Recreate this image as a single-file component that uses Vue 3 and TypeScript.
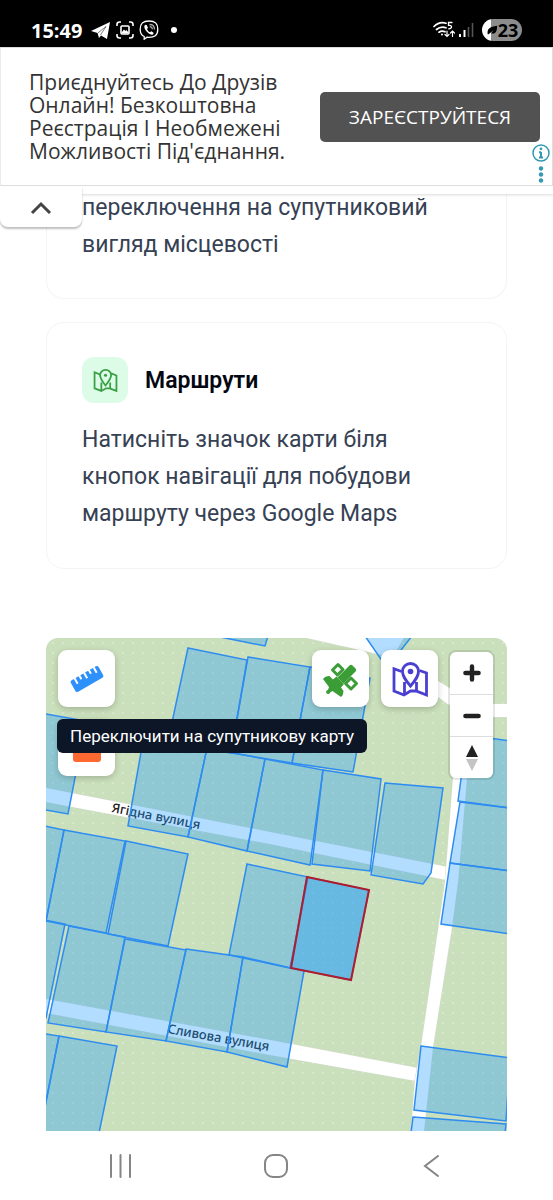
<script setup lang="ts">
import { ref } from 'vue'

const tipVisible = ref(true)
const adOpen = ref(true)

const roads: string[] = [
  '298,636 382,655 438,697 456,710 456,692 438,681 396,651 405,636',
  '450,704 507,704 507,717 450,717',
  '46,788 270,832 448,867 446,880 270,844 46,802',
  '46,999 270,1040 418,1068 416,1081 270,1055 46,1013',
  '457,710 471,710 467,778 458,882 452,927 433,1047 424,1131 411,1131 415,1080 421,1047 445,882 453,778',
]

const parcels: string[] = [
  '215,636 265,646 268,636',
  '365,636 387,668 412,636',
  '188,648 247,660 231,753 168,741',
  '248,657 310,667 292,763 231,753',
  '310,667 370,678 353,772 292,763',
  '143,741 207,748 188,837 128,826',
  '207,748 265,759 247,851 188,837',
  '265,759 323,770 310,865 247,851',
  '323,770 381,779 370,871 312,864',
  '385,783 443,788 431,873 423,884 371,875',
  '40,713 86,721 68,814 40,809',
  '40,825 64,830 46,921 40,921',
  '64,830 125,841 106,933 46,921',
  '126,841 188,854 168,946 108,934',
  '40,919 65,924 46,1018 40,1018',
  '69,926 125,937 106,1032 48,1023',
  '125,939 186,950 166,1041 106,1032',
  '186,949 243,957 227,1052 166,1041',
  '243,957 304,971 287,1067 227,1052',
  '40,1033 59,1036 40,1131',
  '59,1036 117,1046 99,1133 40,1133',
  '247,864 308,877 290,968 229,955',
  '467,735 510,741 510,808 458,801',
  '460,802 510,808 510,871 450,863',
  '450,863 510,871 510,934 441,924',
  '421,1046 510,1058 506,1121 414,1110',
  '413,1117 506,1124 505,1133 411,1133',
]

const selected = '307,877 369,890 351,980 291,968'
</script>

<template>
  <div class="screen">
    <header class="status">
      <span class="time">15:49</span>
      <svg class="i20" viewBox="0 0 20 20"><path d="M0 11 19 2 16 19 10 15.500 8 18 6.500 13Z" fill="#fff" /><path d="M6.800 13 15 6.500 9.500 15" fill="none" stroke="#000" stroke-width=".5" /></svg>
      <svg class="i20" viewBox="0 0 20 20" fill="none" stroke="#fff" stroke-width="1.600"><path d="M2 6V4.500Q2 2 4.500 2H6M14 2h1.500Q18 2 18 4.500V6M18 14v1.500Q18 18 15.500 18H14M6 18H4.500Q2 18 2 15.500V14" /><rect x="6" y="6" width="8" height="8" rx="1" /><path d="m6.500 12.500 2.500-3 1.500 1.500 1-1 2 2.500v1h-7Z" fill="#fff" stroke="none" /></svg>
      <svg class="i20" viewBox="0 0 20 20" fill="none" stroke="#fff" stroke-width="1.300"><path d="M10 1C3.500 1 1.200 3.500 1.200 9.200c0 4 1.300 6.300 4 7.300V19.200L8 17.200c7.800.6 10.800-2 10.800-8C18.800 3.500 16.500 1 10 1Z" /><path d="M6.500 4.800C4.800 5.500 5 7.500 6.500 10c1.700 2.700 4.700 5 6.700 4.700 1-.3 1.700-1.500 1.300-2l-2.200-1.400-1.400.9C9.500 11.700 8.500 10.400 8 9l1-1.200-1.400-2.800Z" fill="#fff" stroke="none" /><path d="M10.500 4.500c3 0 5 1.800 5 5M10.700 6.700c1.600.1 2.600 1 2.700 2.600" stroke="#aaa" /></svg>
      <span class="dot"></span>
      <span class="grow"></span>
      <svg class="wifi" viewBox="0 0 22 18" fill="none" stroke="#fff" stroke-width="1.700" stroke-linecap="round"><path d="M1 5.500C4.500 2 9 1 13 2.200M3.500 8.500c3-2.500 6-3 9.500-1.700M6 11.200c1.700-1.300 4-1.500 6-.4" /><circle cx="9" cy="13.500" r="1" fill="#fff" stroke="none" /><path d="M19 1.500h-3.500v3c3.500-1 4.500 3 .2 3.300" stroke-width="1.300" /><path d="M14 10v5.500m-2-2 2 2 2-2M19.500 15.500V10m-2 2 2-2 2 2" stroke-width="1.200" /></svg>
      <svg class="bars" viewBox="0 0 15 16"><path d="M1 12v3" stroke="#fff" stroke-width="2" /><path d="M5.500 8v7" stroke="#fff" stroke-width="2" /><path d="M9.500 5v10M13.500 1v14" stroke="#555" stroke-width="1.600" /></svg>
      <span class="battery"><svg viewBox="0 0 14 14"><path d="M2 12C1 6 4 3 13 2c0 7-2 10-7 9l3-4-6 5Z" fill="#000" /></svg>23</span>
    </header>

    <section class="ad" aria-label="Реклама">
      <p>Приєднуйтесь До Друзів Онлайн! Безкоштовна Реєстрація І Необмежені Можливості Під'єднання.</p>
      <button class="cta" type="button">ЗАРЕЄСТРУЙТЕСЯ</button>
      <svg class="choices" viewBox="0 0 18 40" fill="none" stroke="#3399b3" stroke-width="1.500"><circle cx="9" cy="9" r="8" /><path d="M9 8v5.500M7 8.300h2M7 13.500h4" stroke-width="2" /><circle cx="9" cy="4.800" r="1.400" fill="#3399b3" stroke="none" /><g fill="#3399b3" stroke="none"><circle cx="9" cy="24.500" r="2.200" /><circle cx="9" cy="30.500" r="2.200" /><circle cx="9" cy="36.500" r="2.200" /></g></svg>
    </section>
    <div class="strip">
      <button class="collapse" type="button" aria-label="Згорнути" @click="adOpen = !adOpen">
        <svg viewBox="0 0 22 14"><path d="m2 12 9-9 9 9" fill="none" stroke="#444" stroke-width="3" /></svg>
      </button>
    </div>

    <main class="content">
      <article class="card first">
        <p>переключення на супутниковий вигляд місцевості</p>
      </article>

      <article class="card">
        <div class="head">
          <span class="badge">
            <svg viewBox="0 0 24 24" fill="none" stroke="#3a9f45" stroke-width="1.700"><path d="M7.500 6.500 1.500 4.200v15.300L8 22l4.500-2.500 3.500 0 6.500 2.500V7.200l-5-2" /><path d="M8 14v8M16.500 14v6M12 16.800C8.500 12.500 6.800 10 6.800 7a5.300 5.300 0 0 1 10.600 0c0 3-1.900 5.500-5.400 9.800Z" /><circle cx="12" cy="7" r="1.500" fill="#3a9f45" stroke="none" /></svg>
          </span>
          <h3>Маршрути</h3>
        </div>
        <p>Натисніть значок карти біля кнопок навігації для побудови маршруту через Google Maps</p>
      </article>

      <section class="map" aria-label="Карта">
        <svg class="canvas" viewBox="46 638 461 493" preserveAspectRatio="xMidYMid slice">
          <defs>
            <pattern id="dots" width="10" height="10" patternUnits="userSpaceOnUse">
              <circle cx="3" cy="3" r="1" fill="#dcebd0" />
            </pattern>
          </defs>
          <rect x="40" y="630" width="480" height="510" fill="#cadfbb" />
          <rect x="40" y="630" width="480" height="510" fill="url(#dots)" />
          <polygon v-for="r in roads" :key="r" :points="r" class="road" />
          <g class="street">
            <text transform="translate(111 812) rotate(11)">Ягідна вулиця</text>
            <text transform="translate(167 1033) rotate(10)">Сливова вулиця</text>
          </g>
          <polygon v-for="p in parcels" :key="p" :points="p" class="parcel" />
          <polygon :points="selected" class="parcel" />
          <polygon :points="selected" class="parcel chosen" />
        </svg>

        <div class="left-tools">
          <button class="tool" type="button" aria-label="Лінійка">
            <svg viewBox="0 0 36 36"><g transform="rotate(-30 18 18)" fill="#2e90fa"><path d="M4 11.500h2.500v6h2v-6h3.500v4h2v-4h3.500v6h2v-6H23v4h2v-4h3.500v6h2v-6H32a2 2 0 0 1 2 2v9a2 2 0 0 1-2 2H4a2 2 0 0 1-2-2v-9a2 2 0 0 1 2-2Z" /></g></svg>
          </button>
          <button class="tool" type="button" aria-label="Площа">
            <svg viewBox="0 0 36 36"><rect x="4" y="4" width="28" height="28" rx="3" fill="#ff6830" /></svg>
          </button>
        </div>

        <div class="right-tools">
          <button class="tool" type="button" aria-label="Супутник" @click="tipVisible = !tipVisible">
            <svg viewBox="0 0 36 36" fill="#3a9d35"><path d="m9.500 9 5.500-5.500 5 5-5.500 5.500Z M22.500 22.500 28 17l5.500 5.500L28 28Z" fill="#fff" stroke="#3a9d35" stroke-width="3" stroke-linejoin="round" /><path d="M14.500 16.500 26.500 4.500q1.500-1.500 3 0l3 3q1.500 1.500 0 3L20.500 22.500Z" /><path d="M0 18Q2 15 6.500 15L10 18.500 13.500 15.500 21 23 18 26.500 20.500 30Q20.500 34 18 36L9.500 30 7 31.500A2 2 0 1 1 5 29L6 26Z" /></svg>
          </button>
          <button class="tool" type="button" aria-label="Маршрут">
            <svg viewBox="0 0 36 36" fill="none" stroke="#4a3fd0" stroke-width="2.800"><path d="M9.500 10.500 2 7.800V30l10 4 6.500-4 5.500 0 10.500 4V12l-7-2.500" /><path d="M12.500 21v13M24.500 21v9M18.500 25C13 18.500 10.500 15 10.500 10.500a8 8 0 0 1 16 0c0 4.500-2.500 8-8 14.500Z" /><circle cx="18.500" cy="10.500" r="2.800" fill="#4a3fd0" stroke="none" /></svg>
          </button>
          <div class="zoom">
            <button type="button" aria-label="Збільшити"><svg viewBox="0 0 20 20"><path d="M10 4v12M4 10h12" /></svg></button>
            <button type="button" aria-label="Зменшити"><svg viewBox="0 0 20 20"><path d="M4 10h12" /></svg></button>
            <button type="button" aria-label="Північ"><svg class="north" viewBox="0 0 14 28"><path d="M1 13 7 1l6 12Z" fill="#222" /><path d="M1 15h12L7 27Z" fill="#c4c4c4" /></svg></button>
          </div>
        </div>

        <div v-show="tipVisible" class="tip" role="tooltip">Переключити на супутникову карту</div>
      </section>
    </main>

    <nav class="sysnav">
      <button type="button" aria-label="Останні"><svg viewBox="0 0 24 24"><path d="M2 1v22M11.500 1v22M21 1v22" /></svg></button>
      <button type="button" aria-label="Додому"><svg viewBox="0 0 24 24"><rect x="1" y="1" width="22" height="22" rx="8" /></svg></button>
      <button type="button" aria-label="Назад"><svg viewBox="0 0 24 24"><path d="M18 2 5 12l13 10" /></svg></button>
    </nav>
  </div>
</template>

<style>
body {
  background: #fff;
}
</style>

<style scoped>
.screen {
  font-family: Roboto, "Noto Sans", sans-serif;
  color: #364153;
}
button {
  border: 0;
  padding: 0;
  background: none;
  font: inherit;
  cursor: pointer;
}
svg {
  display: block;
}
.status {
  display: flex;
  align-items: center;
  height: 47px;
  padding: 13px 31px 0;
  box-sizing: border-box;
  background: #000;
  color: #fff;
  gap: 4px;
}
.time {
  font: 700 20px "Open Sans", sans-serif;
  margin-right: 5px;
}
.i20 {
  width: 20px;
  height: 20px;
}
.dot {
  width: 6px;
  height: 6px;
  margin-left: 8px;
  border-radius: 50%;
  background: #fff;
}
.grow {
  flex: 1;
}
.wifi {
  width: 22px;
  height: 18px;
}
.bars {
  width: 15px;
  height: 16px;
  margin-right: 4px;
}
.battery {
  display: flex;
  align-items: center;
  justify-content: center;
  width: 40px;
  height: 22px;
  border-radius: 11px;
  background: linear-gradient(90deg, #fff 23%, #8c8c8c 23%);
  color: #000;
  font: 700 18px "Open Sans", sans-serif;
}
.battery svg {
  width: 12px;
  height: 14px;
}
.ad {
  position: relative;
  z-index: 2;
  display: flex;
  align-items: center;
  justify-content: space-between;
  height: 139px;
  padding: 0 12px 0 28px;
  box-sizing: border-box;
  border: 1px solid #ddd;
  border-left-color: #ececec;
  background: #fff;
}
.ad p {
  margin: 0;
  width: 275px;
  color: #333;
  font: 400 21px/23px "Open Sans", sans-serif;
}
.cta {
  width: 220px;
  height: 50px;
  border-radius: 5px;
  background: #525252;
  color: #fff;
  font: 400 19px "Open Sans", sans-serif;
}
.choices {
  position: absolute;
  right: 2px;
  bottom: 1px;
  width: 18px;
  height: 40px;
}
.strip {
  position: relative;
  z-index: 1;
  height: 8px;
  background: #fff;
  box-shadow: 0 1px 3px rgba(0, 0, 0, .15);
}
.collapse {
  position: absolute;
  left: 0;
  top: 0;
  width: 82px;
  height: 41px;
  display: grid;
  place-items: center;
  padding-top: 3px;
  border-radius: 0 0 8px 8px;
  background: #fff;
  box-shadow: 0 2px 2px rgba(0, 0, 0, .25);
}
.collapse svg {
  width: 22px;
  height: 14px;
}
.content {
  padding: 0 46px;
}
.card {
  padding: 34px 35px 36px;
  margin-bottom: 23px;
  border: 1px solid #f3f4f6;
  border-radius: 18px;
  background: #fff;
}
.card.first {
  margin-top: -5px;
  padding-top: 0;
  padding-bottom: 35px;
  border-top: 0;
  border-radius: 0 0 18px 18px;
}
.card p {
  margin: 0;
  font-size: 23px;
  line-height: 37px;
}
.head {
  display: flex;
  align-items: center;
  gap: 17px;
  margin-bottom: 18px;
}
.badge {
  display: grid;
  place-items: center;
  width: 46px;
  height: 46px;
  border-radius: 12px;
  background: #dcfce7;
}
.badge svg {
  width: 25px;
  height: 25px;
}
.head h3 {
  margin: 0;
  color: #030712;
  font-size: 23px;
  font-weight: 600;
}
.map {
  position: relative;
  margin-top: 69px;
  height: 493px;
  border-radius: 12px 12px 0 0;
  overflow: hidden;
}
.canvas {
  width: 100%;
  height: 100%;
}
.road {
  fill: #fff;
  stroke: #d5dccf;
  stroke-width: 1;
  paint-order: stroke;
}
.parcel {
  fill: #1e9aff;
  fill-opacity: .34;
  stroke: #2e8cf0;
  stroke-width: 1.5;
}
.chosen {
  stroke: #b01c2e;
  stroke-width: 2;
}
.street text {
  font: 500 13px "Noto Sans", sans-serif;
  fill: #222;
}
.left-tools {
  position: absolute;
  left: 12px;
  top: 12px;
  display: grid;
  gap: 12px;
}
.right-tools {
  position: absolute;
  right: 14px;
  top: 12px;
  display: flex;
  align-items: flex-start;
  gap: 12px;
}
.tool {
  display: grid;
  place-items: center;
  width: 57px;
  height: 57px;
  border-radius: 9px;
  background: #fff;
  box-shadow: 0 2px 6px rgba(0, 0, 0, .2);
}
.tool svg {
  width: 36px;
  height: 36px;
}
.zoom {
  display: grid;
  width: 43px;
  margin-top: 2px;
  border-radius: 6px;
  background: #fff;
  box-shadow: 0 0 0 2px rgba(0, 0, 0, .1);
}
.zoom button {
  display: grid;
  place-items: center;
  height: 42px;
}
.zoom button + button {
  border-top: 1px solid #ddd;
}
.zoom svg {
  width: 22px;
  height: 22px;
  fill: none;
  stroke: #222;
  stroke-width: 4;
  stroke-linecap: round;
}
.zoom .north {
  width: 14px;
  height: 28px;
  stroke: none;
}
.tip {
  position: absolute;
  left: 11px;
  top: 81px;
  padding: 0 13px;
  border-radius: 6px;
  background: #0d1626;
  color: #fff;
  font-size: 17px;
  line-height: 34px;
  white-space: nowrap;
}
.sysnav {
  display: flex;
  align-items: center;
  justify-content: space-around;
  height: 69px;
  padding: 0 43px;
  background: #fff;
}
.sysnav svg {
  width: 24px;
  height: 24px;
  fill: none;
  stroke: #858585;
  stroke-width: 2;
  stroke-linecap: round;
}
</style>
